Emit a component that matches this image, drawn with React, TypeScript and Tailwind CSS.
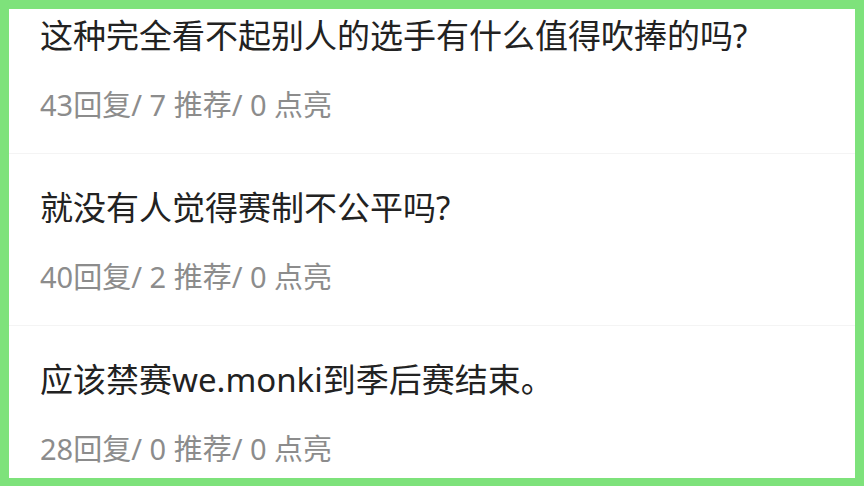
import React from 'react';

const posts = [
  { title: '这种完全看不起别人的选手有什么值得吹捧的吗?', replies: 43, recommends: 7, likes: 0 },
  { title: '就没有人觉得赛制不公平吗?', replies: 40, recommends: 2, likes: 0 },
  { title: '应该禁赛we.monki到季后赛结束。', replies: 28, recommends: 0, likes: 0 },
];

const font = { fontFamily: '"Noto Sans", "Noto Sans CJK SC", sans-serif' };

export default function App() {
  return (
    <div className="w-[864px] h-[486px] bg-[#7ee27b] pt-[9px] pl-[9px] pr-[9px] pb-[8px]" style={font}>
      <div className="h-full bg-white overflow-hidden">
        <div className="-mt-[27px]">
          {posts.map((post, i) => (
            <div key={i} className="pl-[31px] pt-[32px] pb-[30px] border-b border-[#f4f4f4]">
              <div className="text-[33px] leading-[44px] text-[#222222] whitespace-nowrap">{post.title}</div>
              <div className="mt-[29px] text-[29px] leading-[36px] text-[#8c8c8c] whitespace-nowrap">
                {post.replies}回复/ {post.recommends} 推荐/ {post.likes} 点亮
              </div>
            </div>
          ))}
        </div>
      </div>
    </div>
  );
}
